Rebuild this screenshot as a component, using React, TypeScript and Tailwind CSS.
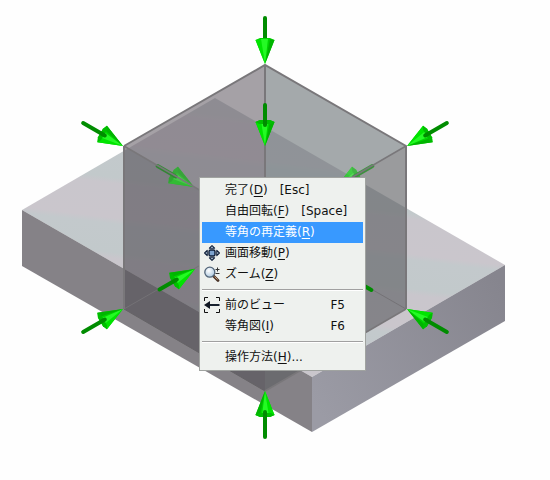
import type { ReactNode } from "react";

type Item = {
  label: string;
  accessKey?: string;
  suffix?: string;
  hint?: string;
  shortcut?: string;
  icon?: ReactNode;
  active?: boolean;
};

function PanIcon() {
  return (
    <svg viewBox="0 0 16 16" className="size-4" aria-hidden="true">
      <rect x="5" y="5" width="6" height="6" rx="1.5" fill="#7ea4cf" stroke="#0d1d38" strokeWidth="1.4" />
      <g fill="#d5e8f8" stroke="#0d1d38" strokeWidth="1.1" strokeLinejoin="round">
        <path d="M8 .6 10.6 3.2H5.4Z" />
        <path d="M8 15.4 5.4 12.8h5.2Z" />
        <path d="M.6 8 3.2 5.4v5.2Z" />
        <path d="M15.4 8 12.8 10.6V5.4Z" />
      </g>
    </svg>
  );
}

function ZoomIcon() {
  return (
    <svg viewBox="0 0 16 16" className="size-4" aria-hidden="true">
      <defs>
        <radialGradient id="lens" cx=".4" cy=".35" r=".7">
          <stop offset="0" stopColor="#fff" />
          <stop offset="1" stopColor="#a9c6de" />
        </radialGradient>
      </defs>
      <path d="m9.5 10 4.5 4.5" stroke="#4a3428" strokeWidth="2.8" strokeLinecap="round" />
      <path d="m10.5 10.6 3 3" stroke="#d2a27c" strokeWidth="1" />
      <circle cx="5.8" cy="6.2" r="5" fill="url(#lens)" stroke="#526579" strokeWidth="1.3" />
      <path d="M11.5 3.5h4M13.5 1.5v4M11.5 7.5h4" stroke="#333" strokeWidth="1" />
    </svg>
  );
}

function PreviousViewIcon() {
  return (
    <svg viewBox="0 0 16 16" className="size-4" aria-hidden="true">
      <path d="M.5 4V.5H4M12 .5h3.5V4M15.5 12v3.5H12M4 15.5H.5V12" fill="none" stroke="#111" />
      <path d="M5 8h10.5" stroke="#17202e" strokeWidth="2" />
      <path d="M0 8 6 4v8Z" fill="#101722" />
    </svg>
  );
}

const groups: Item[][] = [
  [
    { label: "完了", accessKey: "D", hint: "[Esc]" },
    { label: "自由回転", accessKey: "F", hint: "[Space]" },
    { label: "等角の再定義", accessKey: "R", active: true },
    { label: "画面移動", accessKey: "P", icon: <PanIcon /> },
    { label: "ズーム", accessKey: "Z", icon: <ZoomIcon /> },
  ],
  [
    { label: "前のビュー", shortcut: "F5", icon: <PreviousViewIcon /> },
    { label: "等角図", accessKey: "I", shortcut: "F6" },
  ],
  [{ label: "操作方法", accessKey: "H", suffix: "..." }],
];

function MenuRow({ item }: { item: Item }) {
  return (
    <button
      type="button"
      role="menuitem"
      className={`flex h-[21px] w-full items-center pr-[18px] pb-px pl-[2px] text-left ${
        item.active ? "bg-[#3899ff] text-white" : "text-[#111] hover:bg-[#dfe6ee]"
      }`}
    >
      <span className="mr-[5px] size-4 shrink-0">{item.icon}</span>
      <span className="whitespace-nowrap">
        {item.label}
        {item.accessKey && (
          <>
            (<u className="underline-offset-2">{item.accessKey}</u>)
          </>
        )}
        {item.suffix}
      </span>
      {item.hint && <span className="ml-3">{item.hint}</span>}
      {item.shortcut && <span className="ml-auto">{item.shortcut}</span>}
    </button>
  );
}

function ContextMenu() {
  return (
    <div
      role="menu"
      className="absolute top-[177px] left-[199px] w-[167px] border border-[#a0a3a0] bg-[#eef1ee] p-[2px] font-['DejaVu_Sans','Noto_Sans_CJK_JP',sans-serif] text-xs"
    >
      {groups.map((items, index) => (
        <div key={index} role="group">
          {index > 0 && (
            <div role="separator" className="flex h-[10px] items-center">
              <div className="h-[2px] w-full border-t border-[#a0a0a0] bg-white" />
            </div>
          )}
          {items.map((item) => (
            <MenuRow key={item.label} item={item} />
          ))}
        </div>
      ))}
    </div>
  );
}

type ArrowProps = { x: number; y: number; angle: number; length?: number; open?: boolean; opacity?: number };

// The tip sits at (x, y); at angle 0 the arrow points down.
function Arrow({ x, y, angle, length = 48, open = false, opacity = 1 }: ArrowProps) {
  return (
    <g transform={`translate(${x} ${y}) rotate(${angle})`} opacity={opacity}>
      {!open && <path d={`M0 ${2 - length}V-22`} stroke="#008c00" strokeWidth="4" strokeLinecap="round" />}
      <path d="M0 0-9.5-24-5-26H5L9.5-24Z" fill="#00d400" />
      <path d="M0 0-9.5-24-4-25Z" fill="#00e400" />
      <path d="M0 0-4-25 3-25Z" fill="#24fa24" />
      <path d="M0 0 5-25 9.5-24Z" fill="#00b400" />
      {open && (
        <>
          <path d="M-9.5-24-5-26H5L9.5-24 6-22H-6Z" fill="#00be00" />
          <path d={`M0 ${2 - length}V-21`} stroke="#008c00" strokeWidth="4" strokeLinecap="round" />
        </>
      )}
    </g>
  );
}

function Scene() {
  return (
    <svg viewBox="0 0 550 480" className="block h-auto w-full" role="img" aria-label="等角">
      <defs>
        <linearGradient id="sheen" gradientUnits="userSpaceOnUse" x1="124" y1="150" x2="115" y2="224" spreadMethod="repeat">
          <stop offset="0" stopColor="#c3c9cc" />
          <stop offset=".38" stopColor="#c2c9cb" />
          <stop offset=".46" stopColor="#c9c6cc" />
          <stop offset=".92" stopColor="#cac6cc" />
          <stop offset="1" stopColor="#c3c9cc" />
        </linearGradient>
        <linearGradient id="side" gradientUnits="userSpaceOnUse" x1="312" y1="400" x2="505" y2="290">
          <stop offset="0" stopColor="#9b9ba5" />
          <stop offset="1" stopColor="#86858e" />
        </linearGradient>
      </defs>

      <path d="M22 210 215 98 505 265 312 377Z" fill="url(#sheen)" />
      <path d="M22 210 312 377V432L22 266Z" fill="#858287" />
      <path d="M312 377 505 265V321L312 432Z" fill="url(#side)" />

      <path d="M265 65V228L124 146Z" fill="#6e6870" fillOpacity=".62" />
      <path d="M265 65 406 146 265 228Z" fill="#6c7477" fillOpacity=".62" />
      <path d="M124 146 265 228V391L124 309Z" fill="#545157" fillOpacity=".62" />
      <path d="M406 146 265 228V391L406 309Z" fill="#5c5d61" fillOpacity=".62" />
      <path d="M124 309 265 228 406 309" fill="none" stroke="#747276" strokeWidth="1" />
      <path d="M124 309 265 391" stroke="#656366" strokeWidth="1" />

      <Arrow x={194} y={187} angle={-60} length={44} open opacity={0.6} />
      <Arrow x={336} y={187} angle={60} length={44} open opacity={0.6} />
      <g fill="none" stroke="#79777a" strokeWidth="2">
        <path d="M124 146 265 65 406 146V309M124 146V309M265 65V228" />
        <path d="M124 146 265 228 406 146" strokeWidth="1.5" />
        <path d="M406 309 265 391" strokeWidth="1.5" />
      </g>
      <Arrow x={265} y={146} angle={0} length={43} open />
      <Arrow x={195} y={269} angle={-120} length={43} open />
      <Arrow x={335} y={269} angle={120} length={44} open />

      <Arrow x={265} y={64} angle={0} />
      <Arrow x={123} y={146} angle={-60} open />
      <Arrow x={407} y={146} angle={60} open />
      <Arrow x={123} y={309} angle={-120} open />
      <Arrow x={407} y={309} angle={120} open />
      <Arrow x={265} y={391} angle={180} open />
    </svg>
  );
}

export default function App() {
  return (
    <main className="relative min-h-screen bg-[#fefefe]">
      <Scene />
      <ContextMenu />
    </main>
  );
}
